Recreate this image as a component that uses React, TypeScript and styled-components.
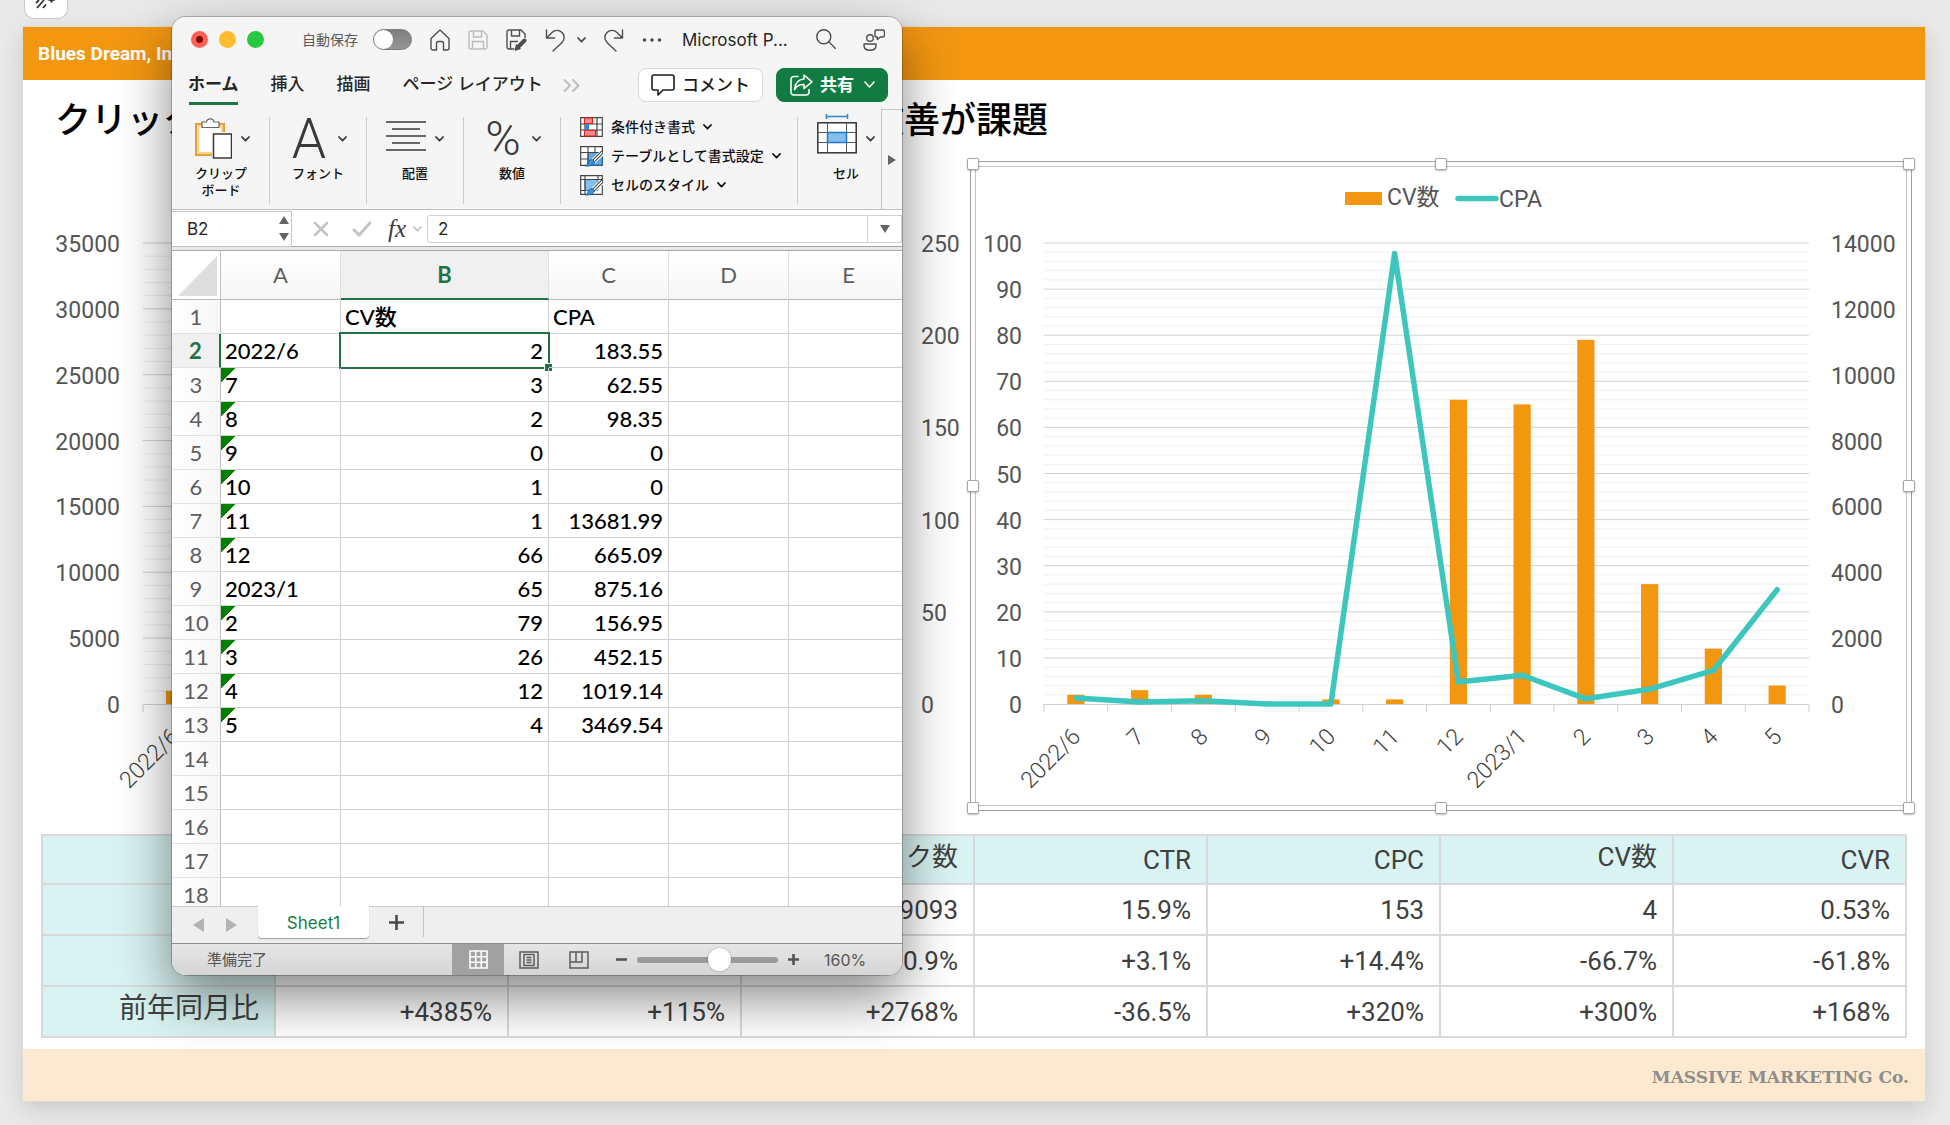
import React from "react";
import styled, { createGlobalStyle, css } from "styled-components";

const fonts = {
  slide: `Roboto, "Noto Sans CJK JP", sans-serif`,
  ui: `Inter, "Noto Sans CJK JP", sans-serif`,
  cell: `Lato, "Noto Sans CJK JP", sans-serif`,
  slab: `"DejaVu Serif", serif`,
  math: `"Liberation Serif", serif`,
};

const colors = {
  orange: "#f39711",
  teal: "#3cc6be",
  tealPale: "#d8f3f1",
  rule: "#d9d9d9",
  ink: "#404040",
  axis: "#555555",
  excel: "#217346",
};

const GlobalStyle = createGlobalStyle`
  *, *::before, *::after { box-sizing: border-box; }
  body { margin: 0; background: #e9e9e9; overflow: hidden; font-family: ${fonts.ui}; }
  button, input { font: inherit; color: inherit; margin: 0; padding: 0; border: 0; background: none; }
  svg { display: block; }
`;

/* ---------- Presentation canvas ---------- */

const Desktop = styled.main`
  position: relative;
  min-height: 100vh;
`;

const TopStrip = styled.div`
  height: 27px;
  padding: 0 24px;
`;

const DesignerButton = styled.button`
  display: flex;
  justify-content: center;
  width: 44px;
  height: 19px;
  background: #fff;
  border: 1px solid #c9c9c9;
  border-top: 0;
  border-radius: 0 0 10px 10px;
`;

const Slide = styled.article`
  margin: 0 25px 0 23px;
  background: #fff;
  box-shadow: 0 0 0 1px #dcdcdc, 0 8px 22px rgba(0, 0, 0, 0.14);
  font-family: ${fonts.slide};
  color: ${colors.ink};
`;

const SlideHeader = styled.header`
  display: flex;
  align-items: center;
  height: 53px;
  padding: 0 15px;
  background: ${colors.orange};
  color: #fff;
  font-size: 19px;
  font-weight: 700;
`;

const SlideTitle = styled.h1`
  display: flex;
  justify-content: space-between;
  max-width: 1025px;
  height: 81px;
  margin: 0;
  padding: 0 0 0 32px;
  color: #000;
  font-size: 36px;
  font-weight: 500;
  line-height: 82px;
`;

const Charts = styled.section`
  display: grid;
  grid-template-columns: 1fr 1fr;
  padding: 0 13px 0 5px;
`;

const ChartFrame = styled.figure<{ $selected?: boolean }>`
  position: relative;
  margin: 0;
  ${(p) =>
    p.$selected &&
    css`
      box-shadow: inset 0 0 0 1px #a0a0a0;
      outline: 1px solid #c4c4c4;
      outline-offset: -6px;
    `}
`;

const ChartSvg = styled.svg`
  width: 100%;
  height: auto;
  overflow: visible;
  font-family: ${fonts.slide};
  font-size: 23px;
  fill: ${colors.axis};
`;

const Handle = styled.span<{ $x: number; $y: number }>`
  position: absolute;
  left: calc(${(p) => p.$x}% + ${(p) => 3 - (p.$x * 6) / 100}px);
  top: calc(${(p) => p.$y}% + ${(p) => 3 - (p.$y * 6) / 100}px);
  width: 12px;
  height: 12px;
  margin: -6px;
  background: #fff;
  border: 1px solid #a6a6a6;
  border-radius: 2px;
  box-shadow: 0 1px 2px rgba(0, 0, 0, 0.25);
`;

const Metrics = styled.table`
  width: calc(100% - 36px);
  margin: 23px 18px 11px;
  border-collapse: collapse;
  table-layout: fixed;
  font-size: 26px;
`;

const MetricRow = styled.tr<{ $head?: boolean }>`
  height: ${(p) => (p.$head ? 49 : 51)}px;
`;

const metricCell = css`
  border: 2px solid ${colors.rule};
  padding: 0 15px;
  text-align: right;
  font-weight: 400;
  line-height: 36px;
`;

const MetricHead = styled.th<{ $kanji?: boolean }>`
  ${metricCell}
  background: ${colors.tealPale};
  ${(p) => p.$kanji && "padding-bottom: 6px;"}
  &[scope="row"] {
    font-size: 28px;
  }
`;

const MetricCell = styled.td`
  ${metricCell}
`;

const SlideFooter = styled.footer`
  display: flex;
  align-items: center;
  justify-content: flex-end;
  height: 52px;
  padding: 4px 16px 0;
  background: #fde9cf;
  color: #8e8e8e;
  font-family: ${fonts.slab};
  font-size: 17px;
  font-weight: 700;
`;

/* ---------- Charts ---------- */

type ChartProps = {
  left: number;
  right: number;
  labelX: number;
  primary: string[];
  secondary: string[];
  minor: number;
  bars: number[];
  max: number;
  categories: string[];
  children?: React.ReactNode;
};

const TOP = 82;
const BOTTOM = 543;
const SLOTS = 12;

function ComboChart(p: ChartProps) {
  const span = BOTTOM - TOP;
  const slot = (p.right - p.left) / SLOTS;
  const majors = p.primary.length - 1;
  const lines = majors * p.minor;
  return (
    <ChartSvg viewBox="0 0 942 650" role="img">
      {Array.from({ length: lines }, (_, i) => {
        const y = TOP + (span * i) / lines;
        return (
          <line key={i} x1={p.left} x2={p.right} y1={y} y2={y} stroke={i % p.minor ? "#efefef" : "#d2d2d2"} />
        );
      })}
      {p.bars.map((v, i) => {
        const h = (span * v) / p.max;
        return (
          <rect key={i} x={p.left + slot * (i + 0.5) - 8.6} y={BOTTOM - h} width={17.2} height={h} fill={colors.orange} />
        );
      })}
      <path
        d={
          `M${p.left} ${BOTTOM + 0.5}H${p.right}` +
          Array.from({ length: SLOTS + 1 }, (_, i) => `M${p.left + slot * i} ${BOTTOM}v8`).join("")
        }
        stroke="#cfcfcf"
        fill="none"
      />
      {p.primary.map((t, i) => (
        <text key={t} x={p.labelX} y={BOTTOM - (span * i) / majors + 9} textAnchor="end">
          {t}
        </text>
      ))}
      {p.secondary.map((t, i) => (
        <text key={t} x={p.right + 22} y={BOTTOM - (span * i) / (p.secondary.length - 1) + 9}>
          {t}
        </text>
      ))}
      {p.categories.map((t, i) => (
        <text
          key={t}
          textAnchor="end"
          fontWeight={300}
          fill="#404040"
          transform={`translate(${p.left + slot * (i + 0.5) + 6} 577) rotate(-45)`}
        >
          {t}
        </text>
      ))}
      {p.children}
    </ChartSvg>
  );
}

const months = ["2022/6", "7", "8", "9", "10", "11", "12", "2023/1", "2", "3", "4", "5"];
const conversions = [2, 3, 2, 0, 1, 1, 66, 65, 79, 26, 12, 4];
const cpa = ["183.55", "62.55", "98.35", "0", "0", "13681.99", "665.09", "875.16", "156.95", "452.15", "1019.14", "3469.54"];

const range = (from: number, to: number, step: number) => {
  const out: string[] = [];
  for (let v = from; v <= to; v += step) out.push(String(v));
  return out;
};

function CpaChart() {
  const left = 74;
  const right = 839;
  const slot = (right - left) / SLOTS;
  const points = cpa
    .map((v, i) => `${left + slot * (i + 0.5)},${BOTTOM - ((BOTTOM - TOP) * Number(v)) / 14000}`)
    .join(" ");
  return (
    <ComboChart
      left={left}
      right={right}
      labelX={52}
      primary={range(0, 100, 10)}
      secondary={range(0, 14000, 2000)}
      minor={5}
      bars={conversions}
      max={100}
      categories={months}
    >
      <polyline points={points} fill="none" stroke={colors.teal} strokeWidth={5.5} strokeLinecap="round" strokeLinejoin="round" />
      <rect x={375} y={31} width={37} height={13} fill={colors.orange} />
      <text x={417} y={44}>CV数</text>
      <line x1={488} x2={526} y1={37.5} y2={37.5} stroke={colors.teal} strokeWidth={5.5} strokeLinecap="round" />
      <text x={529} y={46}>CPA</text>
    </ComboChart>
  );
}

/* ---------- Spreadsheet window ---------- */

const Window = styled.section`
  position: absolute;
  left: 172px;
  top: 17px;
  width: 730px;
  display: flex;
  flex-direction: column;
  overflow: hidden;
  border-radius: 14px;
  background: #f5f5f5;
  color: #262626;
`;

const WindowShadow = styled.div`
  position: absolute;
  left: 172px;
  top: 17px;
  width: 730px;
  height: 958px;
  border-radius: 14px;
  box-shadow: 0 0 0 1px rgba(0, 0, 0, 0.22), 0 22px 54px rgba(0, 0, 0, 0.48);
`;

const TitleBar = styled.header`
  display: flex;
  align-items: center;
  height: 45px;
  padding: 0 17px 0 19px;
`;

const Lights = styled.div`
  display: flex;
  gap: 11px;
`;

const Light = styled.button<{ $color: string; $dot?: boolean }>`
  width: 17px;
  height: 17px;
  border-radius: 50%;
  background: ${(p) => (p.$dot ? `radial-gradient(circle, #7d0a06 0 3px, ${p.$color} 4px)` : p.$color)};
`;

const AutoSave = styled.label`
  display: flex;
  align-items: center;
  gap: 15px;
  margin: 0 18px 0 38px;
  color: #5a5a5a;
  font-size: 14px;
  line-height: 20px;
`;

const Switch = styled.input`
  appearance: none;
  display: flex;
  width: 39px;
  height: 21px;
  border-radius: 11px;
  background: linear-gradient(#7d7d7d, #979797);
  border: 1px solid #7c7c7c;
  &::before {
    content: "";
    width: 19px;
    height: 19px;
    border-radius: 50%;
    background: #fff;
  }
`;

const QuickTools = styled.div`
  display: flex;
  align-items: center;
  gap: 18px;
`;

const UndoGroup = styled.div`
  display: flex;
  align-items: center;
  gap: 12px;
`;

const IconButton = styled.button<{ $muted?: boolean }>`
  display: flex;
  color: ${(p) => (p.$muted ? "#bcbcbc" : "#4d4d4d")};
`;

const FileName = styled.span`
  flex: 1;
  padding-left: 20px;
  font-size: 17px;
  white-space: nowrap;
`;

const WindowTools = styled.div`
  display: flex;
  gap: 27px;
`;

const RibbonTabs = styled.nav`
  display: flex;
  align-items: center;
  height: 47px;
  padding: 0 14px 0 16px;
`;

const TabList = styled.div`
  display: flex;
  flex: 1;
  align-items: center;
  gap: 20px;
`;

const TabGroup = styled.div`
  display: flex;
  gap: 32px;
`;

const RibbonTab = styled.button<{ $active?: boolean }>`
  height: 32px;
  font-size: 17px;
  line-height: 24px;
  font-weight: ${(p) => (p.$active ? 700 : 500)};
  box-shadow: ${(p) => (p.$active ? `0 4px 0 -1px ${colors.excel}` : "none")};
  padding-bottom: 4px;
  white-space: nowrap;
`;

const Actions = styled.div`
  display: flex;
  gap: 13px;
`;

const ActionButton = styled.button<{ $primary?: boolean }>`
  display: flex;
  align-items: center;
  gap: 7px;
  height: 34px;
  margin-top: -1px;
  padding: 0 12px;
  border-radius: 8px;
  font-size: 17px;
  line-height: 24px;
  font-weight: ${(p) => (p.$primary ? 700 : 500)};
  color: ${(p) => (p.$primary ? "#fff" : "#1c1c1c")};
  background: ${(p) => (p.$primary ? "#107c41" : "#fff")};
  border: 1px solid ${(p) => (p.$primary ? "#107c41" : "#d8d8d8")};
`;

const Ribbon = styled.div`
  display: flex;
  height: 101px;
  border-bottom: 1px solid #bdbdbd;
`;

const RibbonScroll = styled.div`
  display: flex;
  flex: 1;
  overflow: hidden;
  padding: 8px 0 5px 1px;
`;

const RibbonGroup = styled.div`
  display: flex;
  flex: none;
  flex-direction: column;
  align-items: center;
  gap: 4px;
  width: 97px;
  border-right: 1px solid #cdcdcd;
  font-size: 13px;
  line-height: 17px;
  font-weight: 500;
  text-align: center;
  color: #111;
`;

const GroupButton = styled.button`
  display: flex;
  align-items: center;
  justify-content: center;
  gap: 9px;
  height: 44px;
  color: #3a3a3a;
`;

const IconBox = styled.span`
  display: flex;
  justify-content: center;
  width: 40px;
  height: 44px;
`;

const GlyphIcon = styled.span<{ $size: number }>`
  display: flex;
  align-items: center;
  justify-content: center;
  width: 40px;
  height: 44px;
  font-family: Roboto, sans-serif;
  font-size: ${(p) => p.$size}px;
  font-weight: 300;
  line-height: 44px;
`;

const StyleMenu = styled.div`
  display: flex;
  flex: none;
  flex-direction: column;
  width: 237px;
  padding-left: 19px;
  border-right: 1px solid #cdcdcd;
`;

const StyleItem = styled.button`
  display: flex;
  align-items: flex-start;
  gap: 8px;
  height: 31px;
  font-size: 14px;
  line-height: 20px;
  font-weight: 500;
  color: #111;
  white-space: nowrap;
  & > svg:last-child {
    margin-top: 7px;
  }
`;

const ScrollRight = styled.button`
  display: flex;
  align-items: center;
  justify-content: center;
  width: 21px;
  border: 1px solid #c6c6c6;
  border-width: 1px 0 0 1px;
`;

const FormulaBar = styled.div`
  display: flex;
  align-items: center;
  height: 41px;
  padding-bottom: 3px;
  background: #fff;
  border-bottom: 1px solid #a9a9a9;
  box-shadow: inset 0 -3px 0 #e9e9e9, inset 0 -4px 0 #a9a9a9;
`;

const NameBox = styled.label`
  display: flex;
  align-items: center;
  width: 120px;
  height: 36px;
  padding: 0 2px 0 15px;
  border: 1px solid #c4c4c4;
  border-left: 0;
`;

const NameInput = styled.input`
  flex: 1;
  min-width: 0;
  font-size: 17px;
`;

const FormulaTools = styled.div`
  display: flex;
  align-items: center;
  width: 135px;
  padding: 0 5px 0 21px;
  color: #c4c4c4;
`;

const FormulaChoices = styled.div`
  display: flex;
  flex: 1;
  gap: 23px;
`;

const FxLabel = styled.button`
  width: 32px;
  color: #3d3d3d;
  font-family: ${fonts.math};
  font-size: 25px;
  font-style: italic;
  line-height: 28px;
`;

const FormulaInput = styled.input`
  flex: 1;
  min-width: 0;
  height: 28px;
  padding: 0 10px;
  border: 1px solid #d0d0d0;
  border-radius: 3px 0 0 3px;
  font-size: 17px;
`;

const FormulaExpand = styled.button`
  display: flex;
  align-items: center;
  justify-content: center;
  width: 34px;
  height: 28px;
  border: 1px solid #d0d0d0;
  border-left: 0;
`;

const SheetView = styled.div`
  height: 655px;
  overflow: hidden;
  background: #fff;
`;

const Grid = styled.table`
  width: 737px;
  border-collapse: separate;
  border-spacing: 0;
  table-layout: fixed;
  font-family: ${fonts.cell};
  font-size: 22px;
  line-height: 26px;
`;

const ColHead = styled.th<{ $active?: boolean }>`
  height: 49px;
  padding: 0;
  font-weight: 400;
  color: ${(p) => (p.$active ? colors.excel : "#5e5e5e")};
  background: ${(p) => (p.$active ? "#f0f0f0" : "linear-gradient(#ffffff, #f6f6f6)")};
  border-right: 1px solid #e0e0e0;
  border-bottom: ${(p) => (p.$active ? `2px solid ${colors.excel}` : "1px solid #b9b9b9")};
  ${(p) => p.$active && "font-weight: 700;"}
`;

const Corner = styled.td`
  padding: 4px 3px 3px 6px;
  border-right: 1px solid #c0c0c0;
  border-bottom: 1px solid #b9b9b9;
`;

const RowHead = styled.th<{ $active?: boolean }>`
  height: 34px;
  padding: 0;
  font-weight: ${(p) => (p.$active ? 700 : 400)};
  color: ${(p) => (p.$active ? colors.excel : "#5e5e5e")};
  background: ${(p) => (p.$active ? "#f0f0f0" : "linear-gradient(90deg, #ffffff, #f7f7f7)")};
  border-right: ${(p) => (p.$active ? `2px solid ${colors.excel}` : "1px solid #c0c0c0")};
  border-bottom: 1px solid #e2e2e2;
`;

const Cell = styled.td<{ $num?: boolean; $flag?: boolean }>`
  position: relative;
  padding: 0 5px 0 4px;
  color: #000;
  font-weight: 500;
  white-space: nowrap;
  text-align: ${(p) => (p.$num ? "right" : "left")};
  border-right: 1px solid #cfcfcf;
  border-bottom: 1px solid #cfcfcf;
  ${(p) => p.$flag && "background: linear-gradient(135deg, #008000 0 10px, transparent 10px);"}
`;

const Selection = styled.span`
  position: absolute;
  inset: -2px;
  border: 2px solid ${colors.excel};
  &::after {
    content: "";
    position: absolute;
    right: -4px;
    bottom: -4px;
    width: 8px;
    height: 8px;
    background: ${colors.excel};
    border: 1px solid #fff;
    border-width: 1px 0 0 1px;
  }
`;

const SheetTabs = styled.nav`
  display: flex;
  height: 37px;
  background: #efefef;
  border-top: 1px solid #c9c9c9;
`;

const SheetNav = styled.div`
  display: flex;
  align-items: center;
  gap: 22px;
  width: 86px;
  padding-left: 21px;
`;

const SheetTab = styled.button`
  width: 111px;
  height: 32px;
  margin-top: -1px;
  padding-top: 2px;
  background: #fff;
  color: #1b7d46;
  font-size: 17px;
  border-radius: 0 0 4px 4px;
  box-shadow: 0 1px 1px #9d9d9d;
`;

const AddSheet = styled.button`
  display: flex;
  align-items: center;
  justify-content: center;
  width: 55px;
  height: 30px;
  border-right: 1px solid #c6c6c6;
`;

const StatusBar = styled.footer`
  display: flex;
  align-items: center;
  height: 32px;
  border-top: 1px solid #8f8f8f;
  background: linear-gradient(#e6e6e6, #d5d5d5);
  color: #555;
`;

const Ready = styled.span`
  flex: 1;
  padding-left: 35px;
  font-size: 15px;
  line-height: 20px;
`;

const ViewButton = styled.button<{ $active?: boolean }>`
  display: flex;
  align-items: center;
  justify-content: center;
  width: ${(p) => (p.$active ? 52 : 50)}px;
  height: 100%;
  background: ${(p) => (p.$active ? "#a1a1a1" : "none")};
`;

const Zoom = styled.div`
  display: flex;
  align-items: center;
  gap: 10px;
  width: 298px;
  padding-left: 12px;
`;

const ZoomSlider = styled.input`
  appearance: none;
  width: 141px;
  height: 6px;
  border-radius: 3px;
  background: #9b9b9b;
  &::-webkit-slider-thumb {
    appearance: none;
    width: 23px;
    height: 23px;
    border-radius: 50%;
    background: #fff;
    box-shadow: 0 0 2px rgba(0, 0, 0, 0.35);
  }
`;

const ZoomValue = styled.output`
  padding-left: 15px;
  font-size: 16px;
`;

/* ---------- Icons ---------- */

const Chevron = () => (
  <svg width="9" height="6" viewBox="0 0 9 6" fill="none" stroke="currentColor" strokeWidth="1.800" strokeLinecap="round" strokeLinejoin="round">
    <path d="M1 1l3.500 3.700L8 1" />
  </svg>
);

const Triangle = ({ d, w, h, fill = "#636363" }: { d: string; w: number; h: number; fill?: string }) => (
  <svg width={w} height={h} viewBox={`0 0 ${w} ${h}`} fill={fill}>
    <path d={d} />
  </svg>
);

const LineIcon = ({ w = 20, h = 22, sw = 1.4, children }: { w?: number; h?: number; sw?: number; children: React.ReactNode }) => (
  <svg width={w} height={h} viewBox={`0 0 ${w} ${h}`} fill="none" stroke="currentColor" strokeWidth={sw} strokeLinecap="round" strokeLinejoin="round">
    {children}
  </svg>
);

const ClipboardIcon = () => (
  <svg width="40" height="44" viewBox="0 0 40 44" fill="none">
    <rect x="4" y="7" width="28" height="31" fill="#fff" stroke="#e49a35" strokeWidth="2" />
    <rect x="6" y="9" width="24" height="27" stroke="#fbd28a" strokeWidth="2.400" />
    <path d="M10 10.500V5h4.500a3.800 3.800 0 0 1 7.500 0H27v5.500z" fill="#fff" stroke="#666" strokeWidth="1.200" />
    <rect x="20" y="15" width="20" height="28" fill="#f5f5f5" />
    <rect x="21.500" y="17" width="18" height="24" fill="#fff" stroke="#3a3a3a" strokeWidth="1.500" />
  </svg>
);

const AlignIcon = () => (
  <svg width="40" height="38" viewBox="0 -3 40 38" stroke="#3a3a3a" strokeWidth="1.600">
    <path d="M0 2h40M6 9h28M0 16h40M6 23h28M0 30h40" />
  </svg>
);

const ConditionalIcon = () => (
  <svg width="23" height="20" viewBox="0 0 23 20" fill="none">
    <path d="M.7.700h21.600v18.600H.7zM.7 7h21.600M.7 13h21.600M5 .7v18.600M17 .7v18.600" fill="#fff" stroke="#444" strokeWidth="1.200" />
    <path d="M4.500 1h8v5.500h-8zM4.500 13.500h11v5.500h-11z" fill="#ff8a8a" stroke="#e0231c" strokeWidth="1.200" />
    <path d="M5 7h4v6H5z" fill="#2f86d6" />
  </svg>
);

const BrushGridIcon = ({ full }: { full?: boolean }) => (
  <svg width="23" height="21" viewBox="0 0 23 21" fill="none">
    <path d="M.7.700h21.600v18.600H.7z" fill="#fff" stroke="#444" strokeWidth="1.200" />
    {full ? (
      <path d="M5 4.500h13v11H5z" fill="#83beec" stroke="#1f78c8" />
    ) : (
      <path d="M8 6.500h14v12.500H8z" fill="#5fa9e6" stroke="#1f78c8" />
    )}
    <path d={full ? "M.7 4.500h21.600M.7 15.500h5M5 .7v18.600M18 .7v4" : "M.7 6.500h21.600M.7 13h8M8 .7v18.600M15 .7v6"} stroke="#444" strokeWidth="1.100" />
    <path d="M22 7L13.500 15" stroke="#fff" strokeWidth="5.500" />
    <path d="M22 6.500l-8.500 8.500" stroke="#444" strokeWidth="3.400" strokeLinecap="round" />
    <path d="M21.800 6.800l-8 8" stroke="#fff" strokeWidth="1.300" strokeLinecap="round" />
    <path d="M13.500 14.500c1.500 3-1.500 6-8 5.500 3-.8 2-4 4-5.500 1.500-1 3-.8 4 0z" fill="#3d93dc" stroke="#1864a8" />
  </svg>
);

const CellsIcon = () => (
  <svg width="40" height="44" viewBox="0 3 40 44" fill="none" overflow="visible">
    <path d="M9.500 2.500h21M9.500 0v5M30.500 0v5" stroke="#2a86d1" strokeWidth="1.500" />
    <rect x=".8" y="8.800" width="38.400" height="30" fill="#fff" stroke="#333" strokeWidth="1.500" />
    <path d="M.8 18.500h38.400M.8 28.500h38.400M10.500 9v30M29.500 9v30" stroke="#555" />
    <rect x="10.500" y="18.500" width="19" height="10" fill="#83beec" stroke="#1f78c8" strokeWidth="1.500" />
  </svg>
);

/* ---------- Data ---------- */

const metricHeads = ["", "", "", "クリック数", "CTR", "CPC", "CV数", "CVR"];
const metricRows = [
  ["", "", "", "9093", "15.9%", "153", "4", "0.53%"],
  ["", "", "", "0.9%", "+3.1%", "+14.4%", "-66.7%", "-61.8%"],
  ["前年同月比", "+4385%", "+115%", "+2768%", "-36.5%", "+320%", "+300%", "+168%"],
];

const sheetRows = Array.from({ length: 18 }, (_, i) => {
  if (i === 0) return ["", "CV数", "CPA"];
  if (i <= months.length) return [months[i - 1], String(conversions[i - 1]), cpa[i - 1]];
  return ["", "", ""];
});

const handles: [number, number][] = [
  [0, 0], [50, 0], [100, 0], [0, 50], [100, 50], [0, 100], [50, 100], [100, 100],
];

/* ---------- Window parts ---------- */

function WindowTitle() {
  return (
    <TitleBar>
      <Lights>
        <Light $color="#fe5f57" $dot aria-label="閉じる" />
        <Light $color="#febc2e" aria-label="しまう" />
        <Light $color="#28c840" aria-label="拡大" />
      </Lights>
      <AutoSave>
        自動保存
        <Switch type="checkbox" role="switch" />
      </AutoSave>
      <QuickTools>
        <IconButton aria-label="ホームへ">
          <LineIcon>
            <path d="M1 9.500L10 1l9 8.500V19a2 2 0 0 1-2 2h-3.500v-6.500a2 2 0 0 0-2-2h-3a2 2 0 0 0-2 2V21H3a2 2 0 0 1-2-2z" />
          </LineIcon>
        </IconButton>
        <IconButton $muted aria-label="保存">
          <LineIcon h={20}>
            <path d="M1 3a2 2 0 0 1 2-2h12l4 4v12a2 2 0 0 1-2 2H3a2 2 0 0 1-2-2zM5.500 1v6h8V1M4.500 19v-7.500h11V19" />
          </LineIcon>
        </IconButton>
        <IconButton aria-label="名前を付けて保存">
          <LineIcon h={22} w={21}>
            <path d="M8 20H3a2 2 0 0 1-2-2V3a2 2 0 0 1 2-2h12l4 4v3.500M5.500 1v6h8V1M4.500 20v-7.500h7" />
            <path d="M18.500 11.500L12 18" strokeWidth="4" />
            <path d="M10.500 16l-1 5 4.500-1.500z" fill="currentColor" />
          </LineIcon>
        </IconButton>
        <UndoGroup>
          <IconButton aria-label="元に戻す">
            <LineIcon h={24}>
              <path d="M1.500 2v8h8M1.500 10L7 4.500a7 7 0 0 1 10 0a7 7 0 0 1 0 10L8 23" />
            </LineIcon>
          </IconButton>
          <IconButton aria-label="元に戻す履歴">
            <Chevron />
          </IconButton>
        </UndoGroup>
        <IconButton aria-label="やり直し">
          <LineIcon h={24}>
            <path d="M18.500 2v8h-8M18.500 10L13 4.500a7 7 0 0 0-10 0a7 7 0 0 0 0 10L12 23" />
          </LineIcon>
        </IconButton>
        <IconButton aria-label="その他">
          <LineIcon h={4} sw={0}>
            <g fill="currentColor">
              <circle cx="2.500" cy="2" r="1.800" />
              <circle cx="10" cy="2" r="1.800" />
              <circle cx="17.500" cy="2" r="1.800" />
            </g>
          </LineIcon>
        </IconButton>
      </QuickTools>
      <FileName>Microsoft P...</FileName>
      <WindowTools>
        <IconButton aria-label="検索">
          <LineIcon h={20}>
            <circle cx="7.800" cy="7.800" r="7" />
            <path d="M13 13l6.500 6.500" />
          </LineIcon>
        </IconButton>
        <IconButton aria-label="共同編集">
          <LineIcon w={22} h={22}>
            <circle cx="7" cy="9" r="3.300" />
            <path d="M1 15h12v1.500c0 3-2.500 4.800-6 4.800s-6-1.800-6-4.800zM13 1h6.500a2 2 0 0 1 2 2v3a2 2 0 0 1-2 2h-2.200l-3 2.500V8H13a1.500 1.500 0 0 1-1-1.500V2.500A1.500 1.500 0 0 1 13 1z" />
          </LineIcon>
        </IconButton>
      </WindowTools>
    </TitleBar>
  );
}

function Tabs() {
  return (
    <RibbonTabs>
      <TabList>
        <TabGroup>
          {["ホーム", "挿入", "描画", "ページ レイアウト"].map((t, i) => (
            <RibbonTab key={t} $active={i === 0}>
              {t}
            </RibbonTab>
          ))}
        </TabGroup>
        <IconButton $muted aria-label="その他のタブ">
          <LineIcon w={17} h={13} sw={1.8}>
            <path d="M1.500 1l5.500 5.500L1.500 12M10 1l5.500 5.500L10 12" />
          </LineIcon>
        </IconButton>
      </TabList>
      <Actions>
        <ActionButton>
          <LineIcon w={24} h={22} sw={1.6}>
            <path d="M3 1h18a2 2 0 0 1 2 2v11a2 2 0 0 1-2 2H12l-5 5v-5H3a2 2 0 0 1-2-2V3a2 2 0 0 1 2-2z" />
          </LineIcon>
          コメント
        </ActionButton>
        <ActionButton $primary>
          <LineIcon w={24} h={22} sw={1.6}>
            <path d="M9 2.500H5a3 3 0 0 0-3 3V18a3 3 0 0 0 3 3h12a3 3 0 0 0 3-3v-2.500" />
            <path d="M15 1l8 6.800-8 6.700v-4c-4-.2-7 1-9.500 5C6 9.500 9 5.500 15 5z" />
          </LineIcon>
          共有
          <LineIcon w={14} h={8} sw={1.6}>
            <path d="M4 1l4.500 5L13 1" />
          </LineIcon>
        </ActionButton>
      </Actions>
    </RibbonTabs>
  );
}

function RibbonPart({ icon, label, extra }: { icon: React.ReactNode; label: string; extra?: string }) {
  return (
    <RibbonGroup>
      <GroupButton aria-label={label}>
        {icon}
        <Chevron />
      </GroupButton>
      <span>
        {label}
        {extra && <br />}
        {extra}
      </span>
    </RibbonGroup>
  );
}

function RibbonBar() {
  return (
    <Ribbon>
      <RibbonScroll>
        <RibbonPart icon={<IconBox><ClipboardIcon /></IconBox>} label="クリップ" extra="ボード" />
        <RibbonPart icon={<GlyphIcon $size={55}>A</GlyphIcon>} label="フォント" />
        <RibbonPart icon={<IconBox><AlignIcon /></IconBox>} label="配置" />
        <RibbonPart icon={<GlyphIcon $size={48}>%</GlyphIcon>} label="数値" />
        <StyleMenu>
          <StyleItem>
            <ConditionalIcon />
            条件付き書式
            <Chevron />
          </StyleItem>
          <StyleItem>
            <BrushGridIcon />
            テーブルとして書式設定
            <Chevron />
          </StyleItem>
          <StyleItem>
            <BrushGridIcon full />
            セルのスタイル
            <Chevron />
          </StyleItem>
        </StyleMenu>
        <RibbonPart icon={<IconBox><CellsIcon /></IconBox>} label="セル" />
      </RibbonScroll>
      <ScrollRight aria-label="右へスクロール">
        <Triangle w={8} h={10} d="M0 0l8 5-8 5z" />
      </ScrollRight>
    </Ribbon>
  );
}

function Formula() {
  return (
    <FormulaBar>
      <NameBox>
        <NameInput aria-label="名前ボックス" defaultValue="B2" />
        <Triangle w={10} h={25} d="M5 0l5 8H0zM0 17h10l-5 8z" />
      </NameBox>
      <FormulaTools>
        <FormulaChoices>
          <LineIcon w={16} h={16} sw={2.6}>
            <path d="M2 2l12 12M14 2L2 14" />
          </LineIcon>
          <LineIcon w={20} h={16} sw={3}>
            <path d="M2 9l5 5L18 2" />
          </LineIcon>
        </FormulaChoices>
        <FxLabel aria-label="関数の挿入">fx</FxLabel>
        <Chevron />
      </FormulaTools>
      <FormulaInput aria-label="数式バー" defaultValue="2" />
      <FormulaExpand aria-label="数式バーの展開">
        <Triangle w={10} h={8} d="M0 0h10L5 8z" />
      </FormulaExpand>
    </FormulaBar>
  );
}

function Sheet() {
  return (
    <SheetView>
      <Grid>
        <colgroup>
          <col width={49} />
          <col width={120} />
          <col width={208} />
          <col width={120} />
          <col width={120} />
          <col width={120} />
        </colgroup>
        <thead>
          <tr>
            <Corner>
              <svg width="39" height="40" viewBox="0 0 39 40">
                <path d="M39 0v40H0z" fill="#dedede" />
              </svg>
            </Corner>
            {["A", "B", "C", "D", "E"].map((c) => (
              <ColHead key={c} scope="col" $active={c === "B"}>
                {c}
              </ColHead>
            ))}
          </tr>
        </thead>
        <tbody>
          {sheetRows.map(([a, b, c], i) => (
            <tr key={i}>
              <RowHead scope="row" $active={i === 1}>
                {i + 1}
              </RowHead>
              <Cell $flag={a !== "" && !a.includes("/")}>{a}</Cell>
              <Cell $num={i > 0}>
                {b}
                {i === 1 && <Selection />}
              </Cell>
              <Cell $num={i > 0}>{c}</Cell>
              <Cell />
              <Cell />
            </tr>
          ))}
        </tbody>
      </Grid>
    </SheetView>
  );
}

function WindowBottom() {
  return (
    <>
      <SheetTabs>
        <SheetNav>
          <Triangle w={11} h={14} d="M11 0v14L0 7z" fill="#b3b3b3" />
          <Triangle w={11} h={14} d="M0 0l11 7-11 7z" fill="#b3b3b3" />
        </SheetNav>
        <SheetTab>Sheet1</SheetTab>
        <AddSheet aria-label="シートの追加">
          <svg width="15" height="15" viewBox="0 0 15 15" stroke="#4a4a4a" strokeWidth="2.600">
            <path d="M7.500 0v15M0 7.500h15" />
          </svg>
        </AddSheet>
      </SheetTabs>
      <StatusBar>
        <Ready>準備完了</Ready>
        <ViewButton $active aria-label="標準">
          <svg width="19" height="19" viewBox="0 0 19 19" fill="none" stroke="#fff" strokeWidth="1.600">
            <path d="M1 1h17v17H1zM1 6.700h17M1 12.300h17M6.700 1v17M12.300 1v17" />
          </svg>
        </ViewButton>
        <ViewButton aria-label="ページ レイアウト表示">
          <svg width="20" height="18" viewBox="0 0 20 18" fill="none" stroke="#5c5c5c" strokeWidth="1.500">
            <path d="M1 1h18v16H1zM5 3.500h10v11H5zM7.500 6.500h5M7.500 9h5M7.500 11.500h5" />
          </svg>
        </ViewButton>
        <ViewButton aria-label="改ページ プレビュー">
          <svg width="20" height="18" viewBox="0 0 20 18" fill="none" stroke="#5c5c5c" strokeWidth="1.500">
            <path d="M1 1h18v16H1zM7 1v10M13 1v10H1" />
          </svg>
        </ViewButton>
        <Zoom>
          <svg width="11" height="11" viewBox="0 0 11 11" stroke="#555" strokeWidth="2.600">
            <path d="M0 5.500h11" />
          </svg>
          <ZoomSlider type="range" aria-label="ズーム" min={0} max={100} defaultValue={60} />
          <svg width="11" height="11" viewBox="0 0 11 11" stroke="#555" strokeWidth="2.600">
            <path d="M0 5.500h11M5.500 0v11" />
          </svg>
          <ZoomValue>160%</ZoomValue>
        </Zoom>
      </StatusBar>
    </>
  );
}

const hasKanji = (t: string) => /[^\x00-\x7f]/.test(t);

export default function App() {
  return (
    <Desktop>
      <GlobalStyle />
      <TopStrip>
        <DesignerButton aria-label="デザイナー">
          <svg width="22" height="10" viewBox="0 0 22 10" stroke="#333" strokeWidth="1.800" fill="#333">
            <path d="M1 3l3-3M2 8l7-8M8 8l3-3.500" fill="none" />
            <path d="M12 0h9l-3 1-1.500 2L15 1z" stroke="none" />
          </svg>
        </DesignerButton>
      </TopStrip>

      <Slide>
        <SlideHeader>Blues Dream, Inc.</SlideHeader>
        <SlideTitle>
          <span>クリック</span>
          <span>改善が課題</span>
        </SlideTitle>
        <Charts>
          <ChartFrame>
            <ComboChart
              left={115}
              right={871}
              labelX={92}
              primary={range(0, 35000, 5000)}
              secondary={range(0, 250, 50)}
              minor={5}
              bars={[1000]}
              max={35000}
              categories={["2022/6"]}
            />
          </ChartFrame>
          <ChartFrame $selected>
            <CpaChart />
            {handles.map(([x, y]) => (
              <Handle key={`${x}-${y}`} $x={x} $y={y} />
            ))}
          </ChartFrame>
        </Charts>
        <Metrics>
          <thead>
            <MetricRow $head>
              {metricHeads.map((h, i) => (
                <MetricHead key={i} scope="col" $kanji={hasKanji(h)}>
                  {h}
                </MetricHead>
              ))}
            </MetricRow>
          </thead>
          <tbody>
            {metricRows.map(([head, ...cells], i) => (
              <MetricRow key={i}>
                <MetricHead scope="row" $kanji={hasKanji(head)}>
                  {head}
                </MetricHead>
                {cells.map((c, j) => (
                  <MetricCell key={j}>{c}</MetricCell>
                ))}
              </MetricRow>
            ))}
          </tbody>
        </Metrics>
        <SlideFooter>MASSIVE MARKETING Co.</SlideFooter>
      </Slide>

      <WindowShadow />
      <Window aria-label="Microsoft PowerPoint 内のグラフ">
        <WindowTitle />
        <Tabs />
        <RibbonBar />
        <Formula />
        <Sheet />
        <WindowBottom />
      </Window>
    </Desktop>
  );
}
